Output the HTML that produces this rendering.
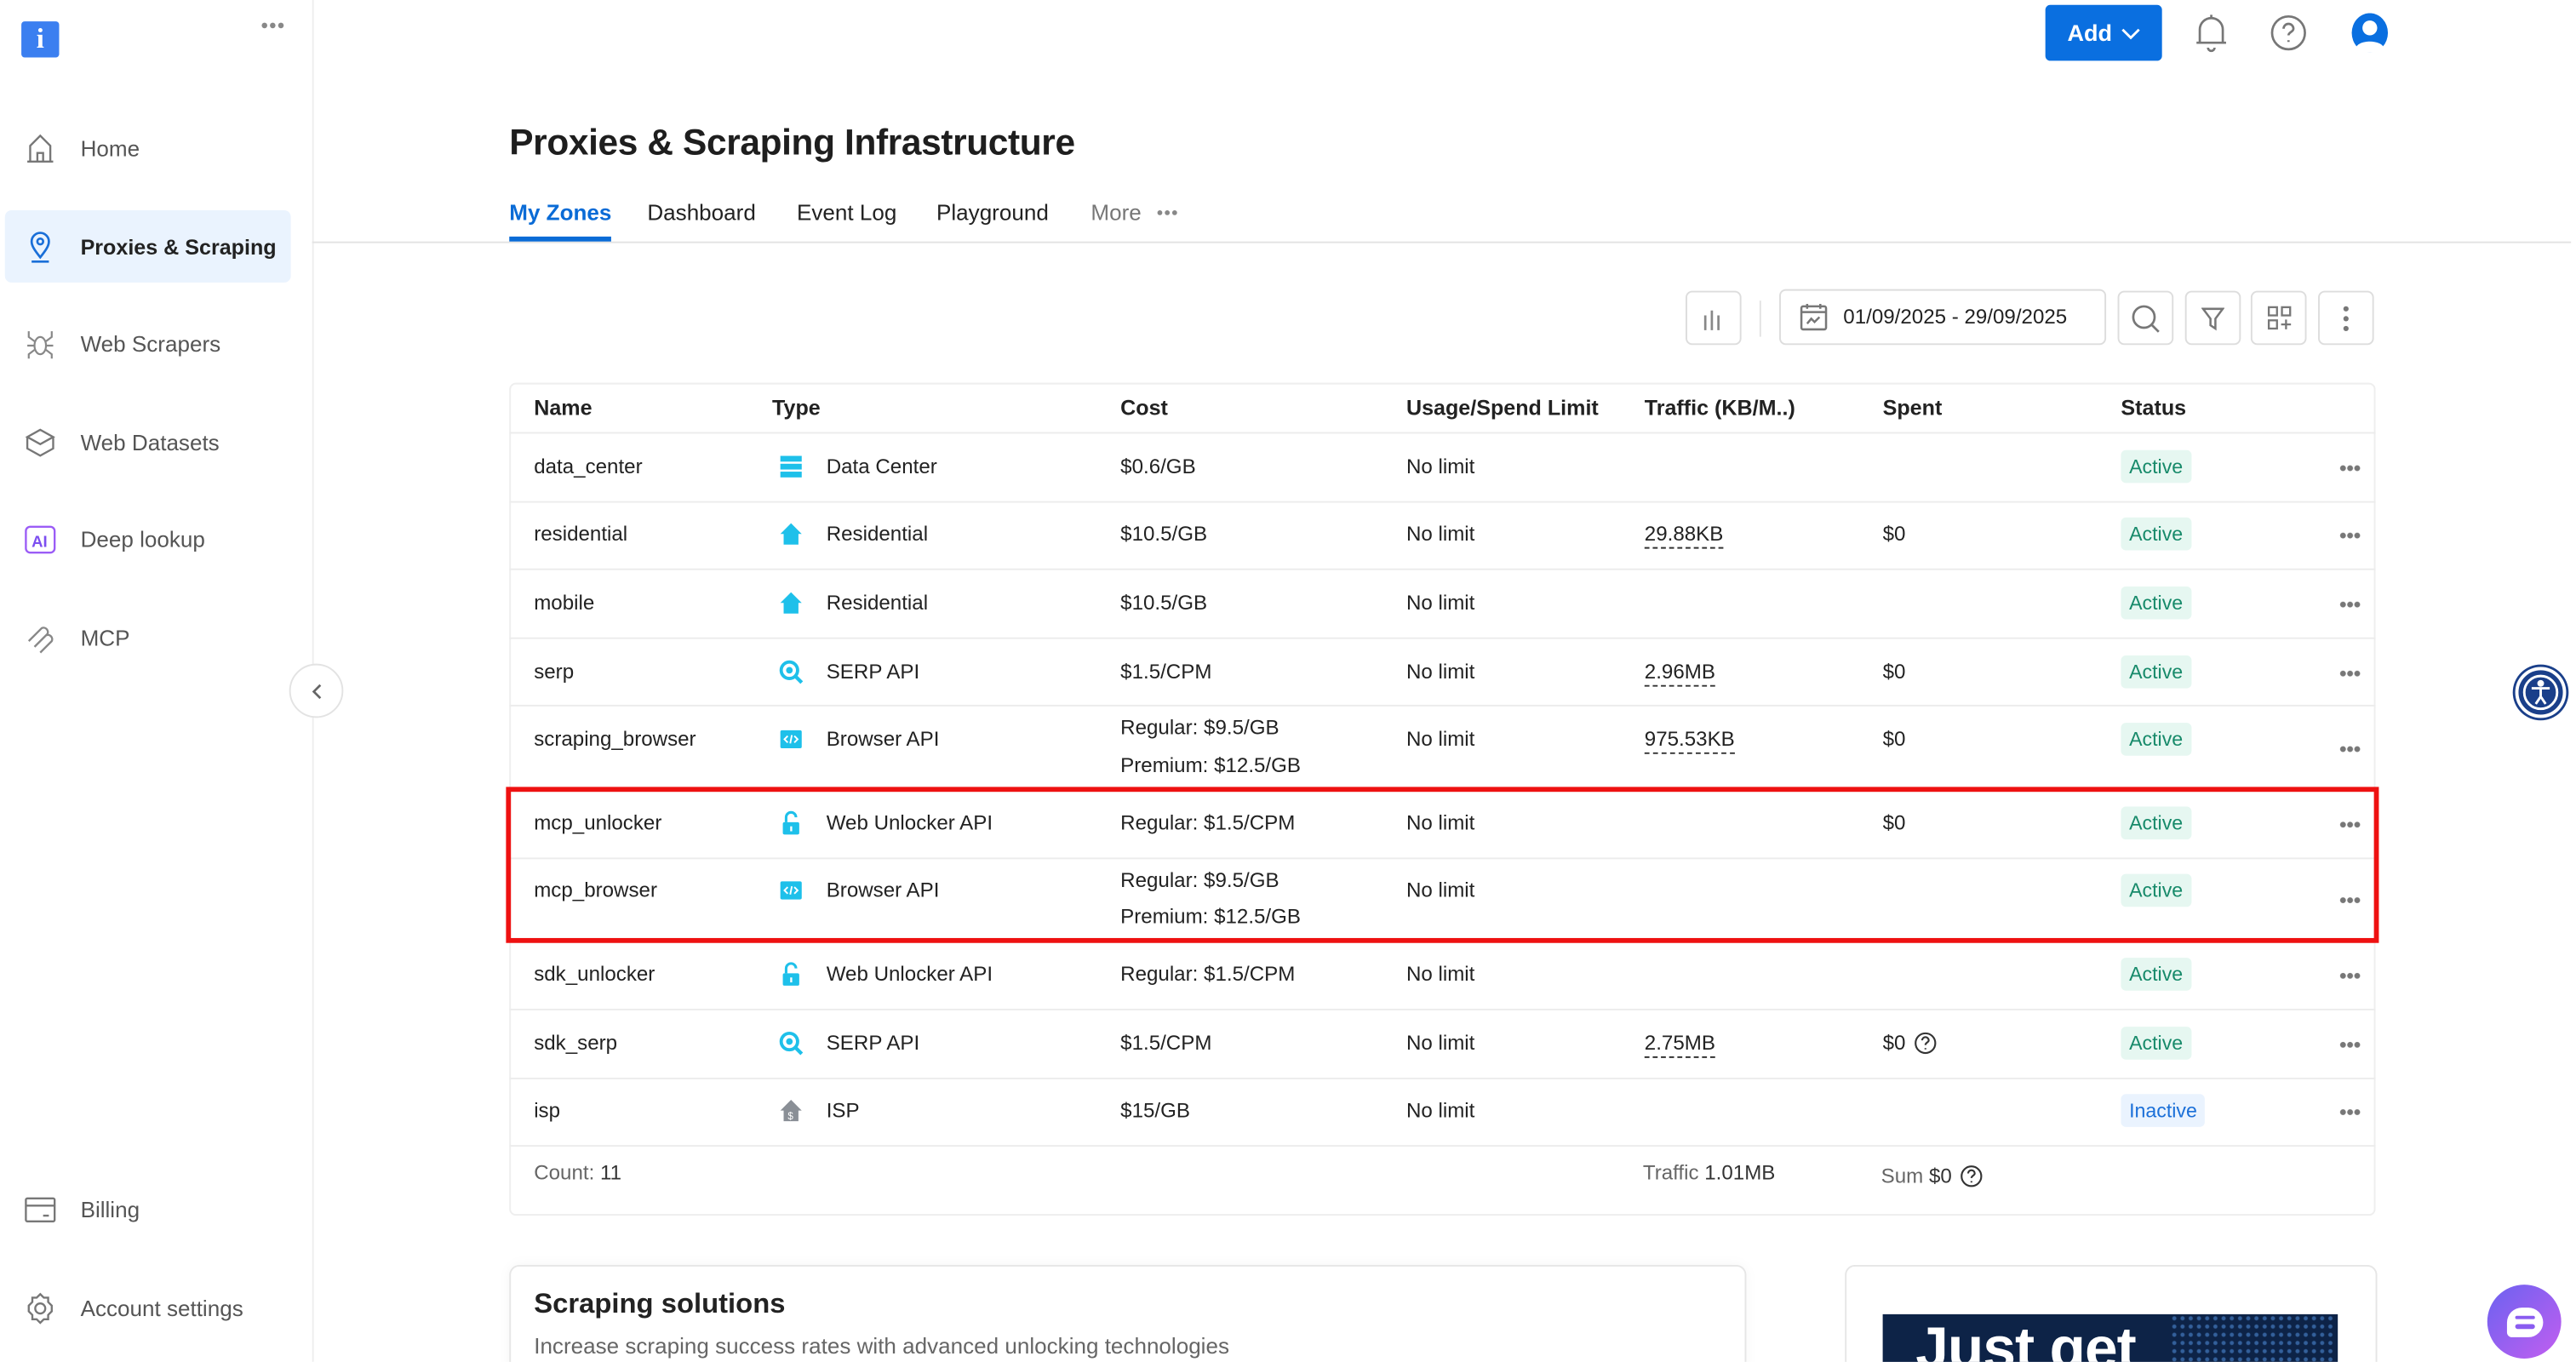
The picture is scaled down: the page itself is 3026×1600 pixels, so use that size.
<!DOCTYPE html>
<html><head><meta charset="utf-8">
<style>
*{box-sizing:border-box;margin:0;padding:0}
html,body{width:3026px;height:1600px;overflow:hidden;background:#fff}
#w{position:absolute;left:0;top:0;width:1568px;height:829px;transform:scale(1.92985);transform-origin:0 0;font-family:"Liberation Sans",Arial,sans-serif;color:#222;background:#fff;overflow:hidden}
.a{position:absolute}
.nav{position:absolute;left:14px;font-size:13.5px;color:#555;display:flex;align-items:center}
.nav svg{width:21px;height:21px;margin-right:14px}
.t{position:absolute;font-size:12.5px;color:#222;white-space:nowrap;transform:translateY(-50%)}
.hd{font-weight:bold;font-size:13px}
.row{position:absolute;left:310px;width:1136px;height:1px;background:#ececec}
.badge{position:absolute;transform:translateY(-50%);background:#e6f7f1;color:#178a6a;font-size:12px;padding:3px 5px;border-radius:3px}
.dots{position:absolute;left:1424px;transform:translateY(-50%);width:13px;height:4px;background:radial-gradient(circle,#777 1.6px,transparent 1.9px) 0 0/4.33px 4px repeat-x}
.ul{border-bottom:1.5px dashed #333;padding-bottom:1px}
.btn{position:absolute;top:177px;height:33px;width:34px;border:1px solid #ddd;border-radius:4px;background:#fff;display:flex;align-items:center;justify-content:center}
.ic{position:absolute;transform:translateY(-50%);width:15px;height:15px}
</style></head><body><div id="w">
<!-- sidebar -->
<div class="a" style="left:190px;top:0;width:1px;height:829px;background:#eee"></div>
<div class="a" style="left:13px;top:13px;width:23px;height:22px;background:#3b7ff0;border-radius:2px;color:#fff;font-weight:bold;font-size:17px;text-align:center;line-height:22px;font-family:'Liberation Serif',serif">i</div>
<svg class="a" style="left:159px;top:13px" width="14" height="5" viewBox="0 0 14 5" fill="#888"><circle cx="2" cy="2.5" r="1.7"/><circle cx="7" cy="2.5" r="1.7"/><circle cx="12" cy="2.5" r="1.7"/></svg>
<div class="nav" style="top:80px"><svg viewBox="0 0 24 24" fill="none" stroke="#777" stroke-width="1.4"><path d="M3 21h18M5 21V10l7-7 7 7v11M10 21v-6h4v6"/></svg>Home</div>
<div class="a" style="left:3px;top:128px;width:174px;height:44px;background:#eaf3fe;border-radius:4px"></div>
<div class="nav" style="top:140px;color:#222;font-weight:bold;font-size:13px"><svg viewBox="0 0 24 24" fill="none" stroke="#1a6fd8" stroke-width="1.6"><path d="M12 19c-4-5-6-8-6-11a6 6 0 0112 0c0 3-2 6-6 11z"/><circle cx="12" cy="8" r="2"/><path d="M6 22h12"/></svg>Proxies &amp; Scraping</div>
<div class="nav" style="top:199px"><svg viewBox="0 0 24 24" fill="none" stroke="#888" stroke-width="1.3"><ellipse cx="12" cy="13" rx="4" ry="6"/><path d="M8 10L4 7V3M16 10l4-3V3M8 13H3M16 13h5M8 16l-4 3v3M16 16l4 3v3"/></svg>Web Scrapers</div>
<div class="nav" style="top:259px"><svg viewBox="0 0 24 24" fill="none" stroke="#777" stroke-width="1.4"><path d="M12 3l9 5-9 5-9-5z M3 8v8l9 5 9-5V8"/></svg>Web Datasets</div>
<div class="nav" style="top:318px"><svg viewBox="0 0 24 24" fill="none" stroke="#9b5cf6" stroke-width="1.4"><rect x="2" y="3" width="20" height="18" rx="3"/><text x="6" y="17" font-size="11" fill="#7c4ef0" stroke="none" font-family="Liberation Sans" font-weight="bold">AI</text></svg>Deep lookup</div>
<div class="nav" style="top:378px"><svg viewBox="0 0 24 24" fill="none" stroke="#888" stroke-width="1.4"><path d="M4 14l9-9a3 3 0 014 4l-8 8M8 18l8-8a3 3 0 014 4l-8 8"/></svg>MCP</div>
<div class="nav" style="top:726px"><svg viewBox="0 0 24 24" fill="none" stroke="#777" stroke-width="1.4"><rect x="2" y="4" width="20" height="16" rx="1"/><path d="M2 9h20M14 16h4"/></svg>Billing</div>
<div class="nav" style="top:786px"><svg viewBox="0 0 24 24" fill="none" stroke="#777" stroke-width="1.4"><circle cx="12" cy="12" r="3.5"/><path d="M12 2l2.5 2.5h3v3L20 10v4l-2.5 2.5v3h-3L12 22l-2.5-2.5h-3v-3L4 14v-4l2.5-2.5v-3h3z"/></svg>Account settings</div>
<div class="a" style="left:176px;top:404px;width:33px;height:33px;border:1px solid #e3e3e3;border-radius:50%;background:#fff;display:flex;align-items:center;justify-content:center"><svg width="12" height="12" viewBox="0 0 12 12"><path d="M8 2L4 6l4 4" fill="none" stroke="#666" stroke-width="1.4"/></svg></div>
<!-- header -->
<div class="a" style="left:1245px;top:3px;width:71px;height:34px;background:#0a6fe0;border-radius:3px;color:#fff;font-weight:bold;font-size:14px;display:flex;align-items:center;justify-content:center">Add <svg width="12" height="10" viewBox="0 0 12 10" style="margin-left:5px"><path d="M1 3l5 5 5-5" fill="none" stroke="#fff" stroke-width="1.5"/></svg></div>
<svg class="a" style="left:1335px;top:8px" width="22" height="24" viewBox="0 0 22 24" fill="none" stroke="#777" stroke-width="1.4"><path d="M4 18V10a7 7 0 0114 0v8zM2 18h18M9 21a2 2 0 004 0M11 1v2"/></svg>
<svg class="a" style="left:1382px;top:9px" width="22" height="22" viewBox="0 0 22 22" fill="none" stroke="#777" stroke-width="1.4"><circle cx="11" cy="11" r="10"/><path d="M8 8.5a3 3 0 116 0c0 2-3 2-3 4M11 15.5v1"/></svg>
<svg class="a" style="left:1431px;top:8px" width="23" height="24" viewBox="0 0 23 24"><ellipse cx="11.5" cy="12" rx="11" ry="12" fill="#0a6fe0"/><circle cx="11.5" cy="9" r="4.5" fill="#fff"/><path d="M3 21c2-5 15-5 17 0a11 11 0 01-17 0z" fill="#fff"/></svg>
<div class="a" style="left:310px;top:74px;font-size:22px;font-weight:bold;color:#1e1e1e;letter-spacing:-0.2px">Proxies &amp; Scraping Infrastructure</div>
<div class="a" style="left:310px;top:122px;font-size:13.5px;color:#0a6bd6;font-weight:bold">My Zones</div>
<div class="a" style="left:394px;top:122px;font-size:13.5px;color:#222">Dashboard</div>
<div class="a" style="left:485px;top:122px;font-size:13.5px;color:#222">Event Log</div>
<div class="a" style="left:570px;top:122px;font-size:13.5px;color:#222">Playground</div>
<div class="a" style="left:664px;top:122px;font-size:13.5px;color:#777">More</div>
<svg class="a" style="left:704px;top:127px" width="13" height="5" viewBox="0 0 13 5" fill="#888"><circle cx="2" cy="2.5" r="1.5"/><circle cx="6.5" cy="2.5" r="1.5"/><circle cx="11" cy="2.5" r="1.5"/></svg>
<div class="a" style="left:190px;top:147px;width:1375px;height:1px;background:#e3e3e3"></div>
<div class="a" style="left:310px;top:144px;width:62px;height:3px;background:#0a6bd6"></div>
<!-- toolbar -->
<div class="btn" style="left:1026px"><svg width="14" height="16" viewBox="0 0 14 16" stroke="#888" stroke-width="1.4"><path d="M2 6v9M6 3v12M10 6v9"/></svg></div>
<div class="a" style="left:1071px;top:183px;width:1px;height:22px;background:#e3e3e3"></div>
<div class="a" style="left:1083px;top:176px;width:199px;height:34px;border:1px solid #ddd;border-radius:4px;display:flex;align-items:center;padding-left:11px;font-size:12.5px;color:#222"><svg width="18" height="18" viewBox="0 0 18 18" fill="none" stroke="#777" stroke-width="1.3" style="margin-right:9px"><rect x="1.5" y="2.5" width="15" height="14" rx="1"/><path d="M1.5 6h15M5 1v3M13 1v3M5 13l2.5-3 2 2 3-3"/></svg>01/09/2025 - 29/09/2025</div>
<div class="btn" style="left:1289px"><svg width="18" height="18" viewBox="0 0 18 18" fill="none" stroke="#777" stroke-width="1.4"><circle cx="8" cy="8" r="6.5"/><path d="M13 13l4 4"/></svg></div>
<div class="btn" style="left:1330px"><svg width="14" height="16" viewBox="0 0 14 16" fill="none" stroke="#777" stroke-width="1.3"><path d="M1 2h12L8.5 8v6l-3-2V8z"/></svg></div>
<div class="btn" style="left:1370px"><svg width="15" height="15" viewBox="0 0 15 15" fill="none" stroke="#777" stroke-width="1.2"><rect x="1" y="1" width="5" height="5"/><rect x="9" y="1" width="5" height="5"/><rect x="1" y="9" width="5" height="5"/><path d="M11.5 8.5v6M8.5 11.5h6"/></svg></div>
<div class="btn" style="left:1411px"><svg width="4" height="16" viewBox="0 0 4 16" fill="#777"><circle cx="2" cy="2" r="1.6"/><circle cx="2" cy="8" r="1.6"/><circle cx="2" cy="14" r="1.6"/></svg></div>
<!-- table -->
<div class="a" style="left:310px;top:233px;width:1136px;height:507px;border:1px solid #eee;border-radius:4px"></div>
<div class="t hd" style="left:325px;top:248px">Name</div>
<div class="t hd" style="left:470px;top:248px">Type</div>
<div class="t hd" style="left:682px;top:248px">Cost</div>
<div class="t hd" style="left:856px;top:248px">Usage/Spend Limit</div>
<div class="t hd" style="left:1001px;top:248px">Traffic (KB/M..)</div>
<div class="t hd" style="left:1146px;top:248px">Spent</div>
<div class="t hd" style="left:1291px;top:248px">Status</div>
<div class="row" style="top:263px"></div><div class="row" style="top:305px"></div><div class="row" style="top:346px"></div><div class="row" style="top:388px"></div><div class="row" style="top:429px"></div><div class="row" style="top:481px"></div><div class="row" style="top:522px"></div><div class="row" style="top:573px"></div><div class="row" style="top:614px"></div><div class="row" style="top:656px"></div><div class="row" style="top:697px"></div>

<div class="t" style="left:325px;top:284px">data_center</div>
<svg class="ic" style="left:474px;top:284px" viewBox="0 0 15 15" fill="#1ec0ea"><rect x="1" y="1" width="13" height="3.5"/><rect x="1" y="5.8" width="13" height="3.5"/><rect x="1" y="10.6" width="13" height="3.5"/></svg>
<div class="t" style="left:503px;top:284px">Data Center</div>
<div class="t" style="left:682px;top:284px">$0.6/GB</div><div class="t" style="left:856px;top:284px">No limit</div>
<div class="badge" style="left:1291px;top:284px">Active</div><div class="dots" style="top:285px"></div>

<div class="t" style="left:325px;top:325px">residential</div>
<svg class="ic" style="left:474px;top:325px" viewBox="0 0 15 15" fill="#1ec0ea"><path d="M7.5 1L14 7.5h-2V14H3V7.5H1z"/></svg>
<div class="t" style="left:503px;top:325px">Residential</div>
<div class="t" style="left:682px;top:325px">$10.5/GB</div><div class="t" style="left:856px;top:325px">No limit</div>
<div class="t" style="left:1001px;top:325px"><span class="ul">29.88KB</span></div><div class="t" style="left:1146px;top:325px">$0</div>
<div class="badge" style="left:1291px;top:325px">Active</div><div class="dots" style="top:326px"></div>

<div class="t" style="left:325px;top:367px">mobile</div>
<svg class="ic" style="left:474px;top:367px" viewBox="0 0 15 15" fill="#1ec0ea"><path d="M7.5 1L14 7.5h-2V14H3V7.5H1z"/></svg>
<div class="t" style="left:503px;top:367px">Residential</div>
<div class="t" style="left:682px;top:367px">$10.5/GB</div><div class="t" style="left:856px;top:367px">No limit</div>
<div class="badge" style="left:1291px;top:367px">Active</div><div class="dots" style="top:368px"></div>

<div class="t" style="left:325px;top:409px">serp</div>
<svg class="ic" style="left:474px;top:409px" viewBox="0 0 15 15"><circle cx="6.5" cy="6.5" r="5" fill="none" stroke="#1ec0ea" stroke-width="2"/><circle cx="6.5" cy="6.5" r="2" fill="#1ec0ea"/><path d="M10 10l4 4" stroke="#1ec0ea" stroke-width="2.2"/></svg>
<div class="t" style="left:503px;top:409px">SERP API</div>
<div class="t" style="left:682px;top:409px">$1.5/CPM</div><div class="t" style="left:856px;top:409px">No limit</div>
<div class="t" style="left:1001px;top:409px"><span class="ul">2.96MB</span></div><div class="t" style="left:1146px;top:409px">$0</div>
<div class="badge" style="left:1291px;top:409px">Active</div><div class="dots" style="top:410px"></div>

<div class="t" style="left:325px;top:450px">scraping_browser</div>
<svg class="ic" style="left:474px;top:450px" viewBox="0 0 15 15"><rect x="1" y="2" width="13" height="11" rx="1" fill="#1ec0ea"/><path d="M5.5 5.5l-2 2 2 2M9.5 5.5l2 2-2 2M8 5l-1 5" fill="none" stroke="#fff" stroke-width="1"/></svg>
<div class="t" style="left:503px;top:450px">Browser API</div>
<div class="t" style="left:682px;top:443px">Regular: $9.5/GB</div><div class="t" style="left:682px;top:466px">Premium: $12.5/GB</div>
<div class="t" style="left:856px;top:450px">No limit</div>
<div class="t" style="left:1001px;top:450px"><span class="ul">975.53KB</span></div><div class="t" style="left:1146px;top:450px">$0</div>
<div class="badge" style="left:1291px;top:450px">Active</div><div class="dots" style="top:456px"></div>

<div class="t" style="left:325px;top:501px">mcp_unlocker</div>
<svg class="ic" style="left:474px;top:501px" viewBox="0 0 15 15"><path d="M4.5 7V4a3 3 0 016 0" fill="none" stroke="#1ec0ea" stroke-width="1.6"/><rect x="2.5" y="7" width="10" height="7.5" rx="1" fill="#1ec0ea"/><rect x="7" y="9.5" width="1.2" height="3" fill="#fff"/></svg>
<div class="t" style="left:503px;top:501px">Web Unlocker API</div>
<div class="t" style="left:682px;top:501px">Regular: $1.5/CPM</div><div class="t" style="left:856px;top:501px">No limit</div>
<div class="t" style="left:1146px;top:501px">$0</div>
<div class="badge" style="left:1291px;top:501px">Active</div><div class="dots" style="top:502px"></div>

<div class="t" style="left:325px;top:542px">mcp_browser</div>
<svg class="ic" style="left:474px;top:542px" viewBox="0 0 15 15"><rect x="1" y="2" width="13" height="11" rx="1" fill="#1ec0ea"/><path d="M5.5 5.5l-2 2 2 2M9.5 5.5l2 2-2 2M8 5l-1 5" fill="none" stroke="#fff" stroke-width="1"/></svg>
<div class="t" style="left:503px;top:542px">Browser API</div>
<div class="t" style="left:682px;top:536px">Regular: $9.5/GB</div><div class="t" style="left:682px;top:558px">Premium: $12.5/GB</div>
<div class="t" style="left:856px;top:542px">No limit</div>
<div class="badge" style="left:1291px;top:542px">Active</div><div class="dots" style="top:548px"></div>

<div class="t" style="left:325px;top:593px">sdk_unlocker</div>
<svg class="ic" style="left:474px;top:593px" viewBox="0 0 15 15"><path d="M4.5 7V4a3 3 0 016 0" fill="none" stroke="#1ec0ea" stroke-width="1.6"/><rect x="2.5" y="7" width="10" height="7.5" rx="1" fill="#1ec0ea"/><rect x="7" y="9.5" width="1.2" height="3" fill="#fff"/></svg>
<div class="t" style="left:503px;top:593px">Web Unlocker API</div>
<div class="t" style="left:682px;top:593px">Regular: $1.5/CPM</div><div class="t" style="left:856px;top:593px">No limit</div>
<div class="badge" style="left:1291px;top:593px">Active</div><div class="dots" style="top:594px"></div>

<div class="t" style="left:325px;top:635px">sdk_serp</div>
<svg class="ic" style="left:474px;top:635px" viewBox="0 0 15 15"><circle cx="6.5" cy="6.5" r="5" fill="none" stroke="#1ec0ea" stroke-width="2"/><circle cx="6.5" cy="6.5" r="2" fill="#1ec0ea"/><path d="M10 10l4 4" stroke="#1ec0ea" stroke-width="2.2"/></svg>
<div class="t" style="left:503px;top:635px">SERP API</div>
<div class="t" style="left:682px;top:635px">$1.5/CPM</div><div class="t" style="left:856px;top:635px">No limit</div>
<div class="t" style="left:1001px;top:635px"><span class="ul">2.75MB</span></div>
<div class="t" style="left:1146px;top:635px;display:flex;align-items:center">$0 <svg width="14" height="14" viewBox="0 0 14 14" fill="none" stroke="#333" stroke-width="1.1" style="margin-left:5px"><circle cx="7" cy="7" r="6"/><path d="M5 5.3a2 2 0 114 0c0 1.3-2 1.3-2 2.8M7 10v.8"/></svg></div>
<div class="badge" style="left:1291px;top:635px">Active</div><div class="dots" style="top:636px"></div>

<div class="t" style="left:325px;top:676px">isp</div>
<svg class="ic" style="left:474px;top:676px" viewBox="0 0 15 15" fill="#8a8f96"><path d="M7.5 1L14 7.5h-2V14H3V7.5H1z"/><text x="5.5" y="13" font-size="6" fill="#fff" font-family="Liberation Sans">$</text></svg>
<div class="t" style="left:503px;top:676px">ISP</div>
<div class="t" style="left:682px;top:676px">$15/GB</div><div class="t" style="left:856px;top:676px">No limit</div>
<div class="badge" style="left:1291px;top:676px;background:#eaf3fe;color:#1a6fd8">Inactive</div><div class="dots" style="top:677px"></div>

<div class="t" style="left:325px;top:714px;color:#666">Count: <span style="color:#333">11</span></div>
<div class="t" style="left:1000px;top:714px;color:#666">Traffic <span style="color:#333">1.01MB</span></div>
<div class="t" style="left:1145px;top:716px;color:#666;display:flex;align-items:center">Sum&nbsp;<span style="color:#333">$0</span><svg width="14" height="14" viewBox="0 0 14 14" fill="none" stroke="#333" stroke-width="1.1" style="margin-left:5px"><circle cx="7" cy="7" r="6"/><path d="M5 5.3a2 2 0 114 0c0 1.3-2 1.3-2 2.8M7 10v.8"/></svg></div>
<div class="a" style="left:308px;top:479px;width:1140px;height:95px;border:3px solid #ee1111"></div>
<!-- bottom cards -->
<div class="a" style="left:310px;top:770px;width:753px;height:80px;border:1px solid #e6e6e6;border-radius:6px;box-shadow:0 0 8px rgba(0,0,0,0.04)"></div>
<div class="a" style="left:325px;top:784px;font-size:17px;font-weight:bold;color:#222">Scraping solutions</div>
<div class="a" style="left:325px;top:812px;font-size:13.5px;color:#666">Increase scraping success rates with advanced unlocking technologies</div>
<div class="a" style="left:1123px;top:770px;width:324px;height:80px;border:1px solid #e6e6e6;border-radius:6px"></div>
<div class="a" style="left:1146px;top:800px;width:277px;height:40px;background:#0d2347;overflow:hidden"><div style="position:absolute;left:20px;top:3px;color:#fff;font-weight:bold;font-size:36px;letter-spacing:-0.5px;line-height:1">Just get</div><div style="position:absolute;right:2px;top:0;width:100px;height:30px;background-image:radial-gradient(#3d6fb0 1px,transparent 1.5px);background-size:5px 5px;opacity:.8"></div></div>
<!-- floating -->
<div class="a" style="left:1531px;top:406px;width:31px;height:31px;border-radius:50%;background:#1a3f8a;border:2px solid #fff;box-shadow:0 0 0 1.5px #1a3f8a"><svg width="27" height="27" viewBox="0 0 27 27" fill="none" stroke="#fff" stroke-width="1.5"><circle cx="13.5" cy="13.5" r="10"/><circle cx="13.5" cy="8" r="1.3" fill="#fff"/><path d="M8 11h11M13.5 11v5l-3 4.5M13.5 16l3 4.5"/></svg></div>
<div class="a" style="left:1514px;top:782px;width:45px;height:45px;border-radius:50%;background:linear-gradient(135deg,#6b62f0,#c25ef0);display:flex;align-items:center;justify-content:center"><div style="width:22px;height:18px;background:#fff;border-radius:9px 9px 9px 3px;display:flex;flex-direction:column;justify-content:center;align-items:center;gap:3px"><div style="width:12px;height:2.5px;background:#8a5cf0;border-radius:2px"></div><div style="width:12px;height:2.5px;background:#8a5cf0;border-radius:2px"></div></div></div>
</div></body></html>
